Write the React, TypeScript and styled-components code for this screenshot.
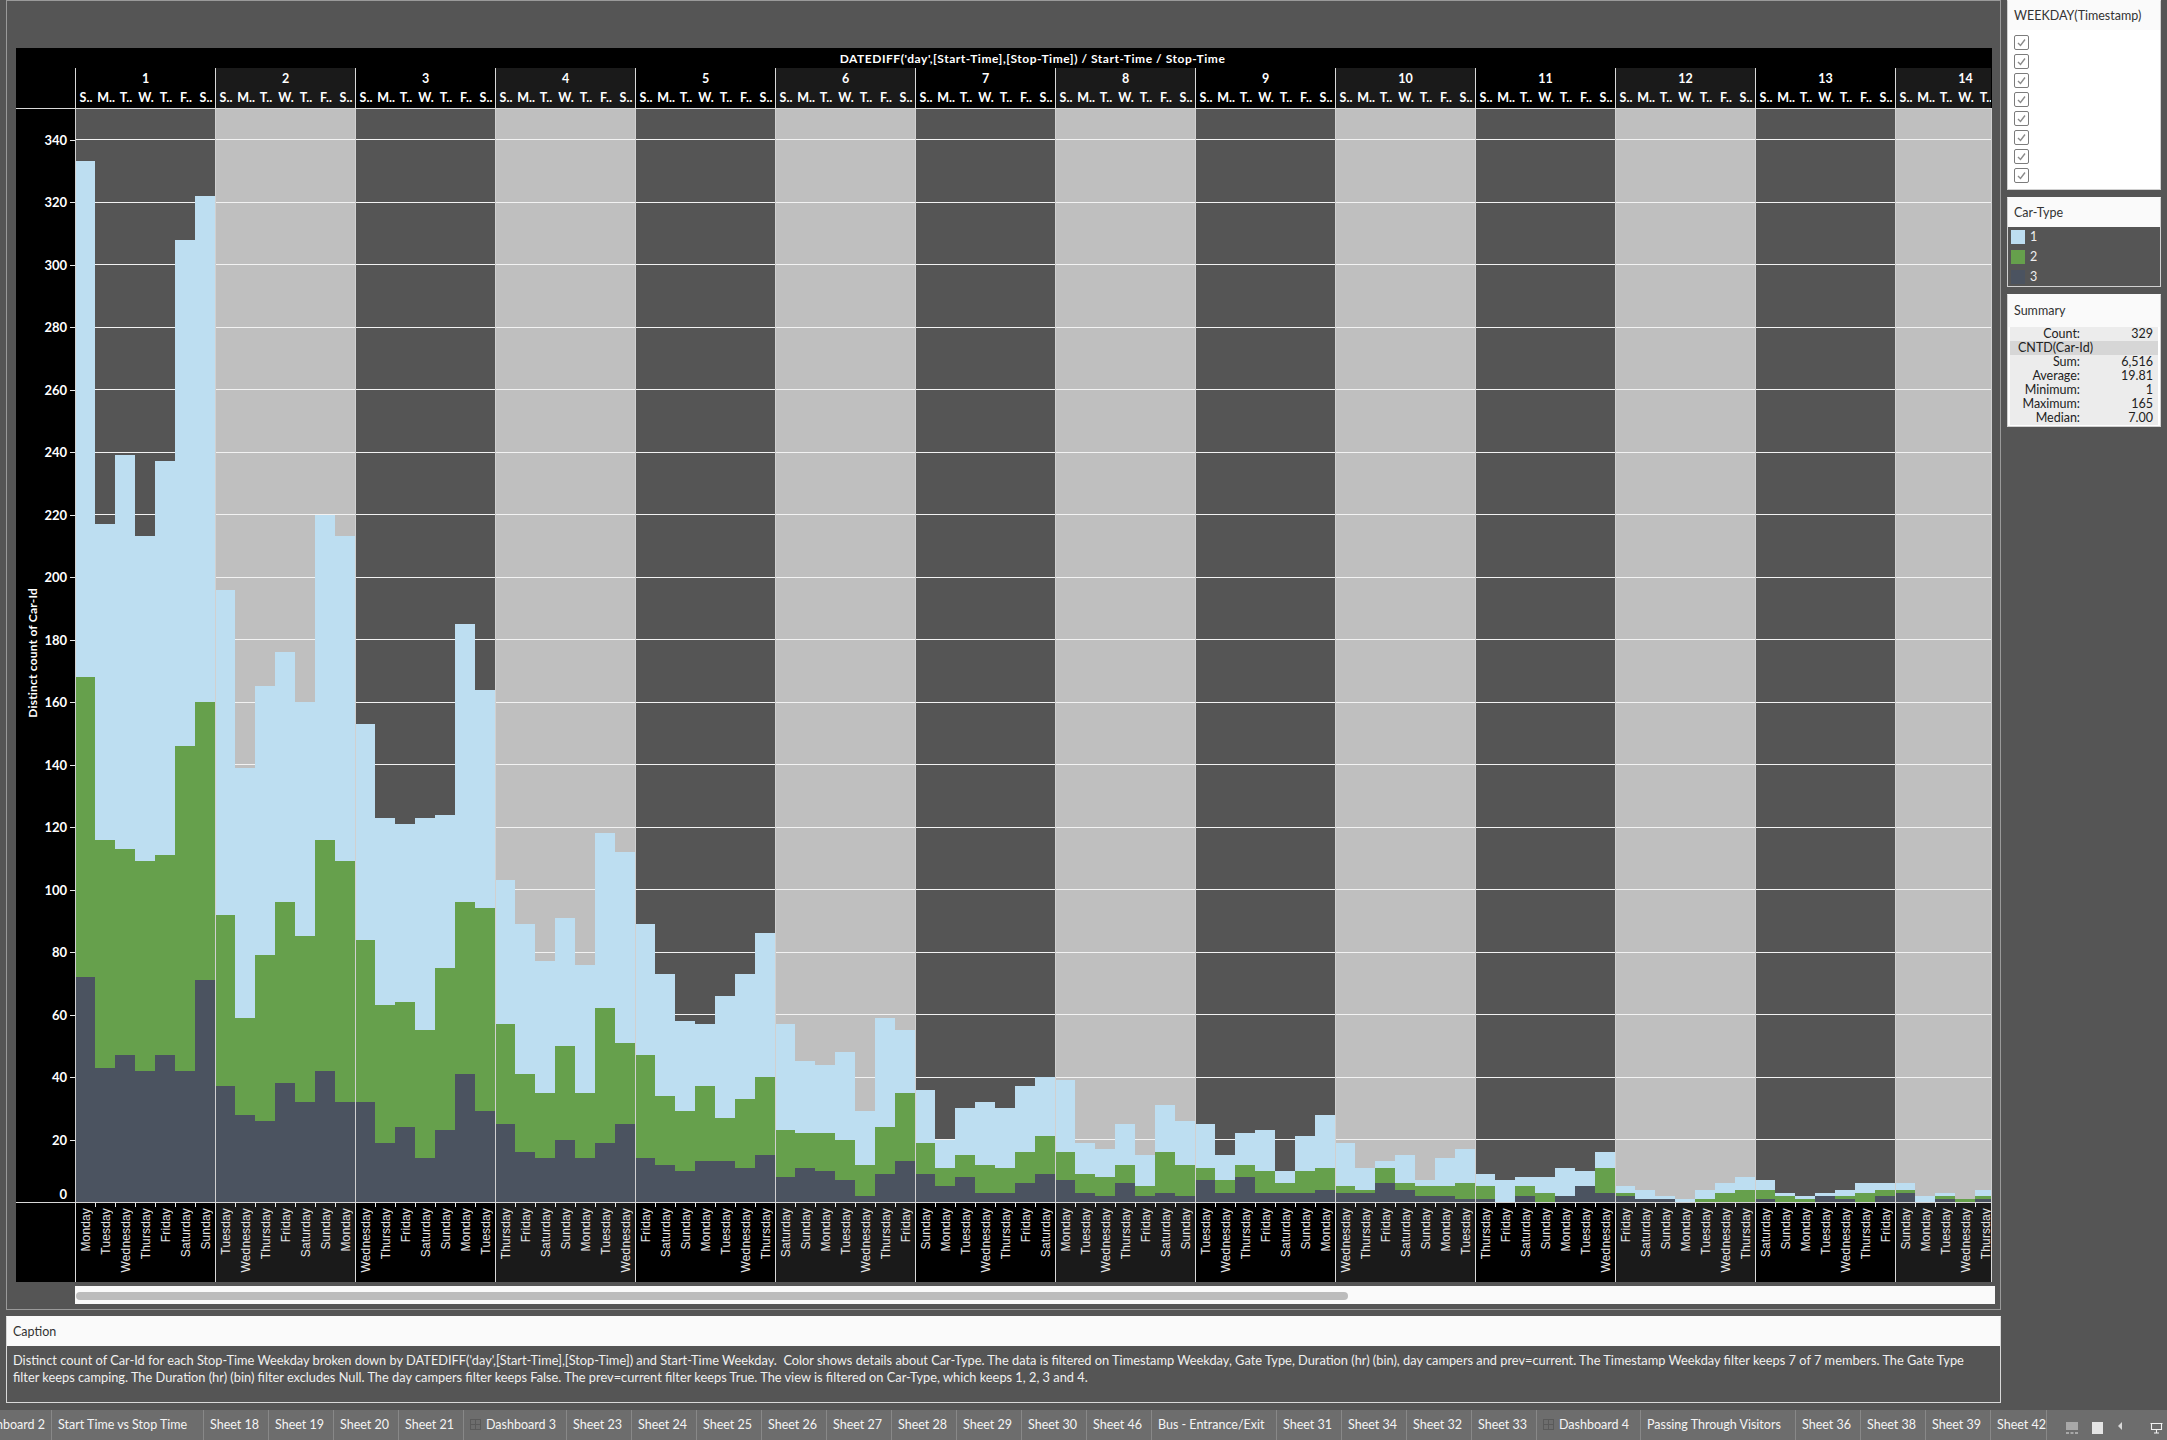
import styled, { createGlobalStyle } from "styled-components";

const GlobalStyle = createGlobalStyle`
  html, body {
    margin: 0;
    padding: 0;
    background: #555555;
    overflow: hidden;
  }
  * { box-sizing: border-box; }
`;

const UI_FONT = `Lato, "Open Sans", sans-serif`;
const AXIS_FONT = `"Liberation Sans", Arial, sans-serif`;

const Page = styled.div`
  width: 2167px;
  height: 1440px;
  display: flex;
  flex-direction: column;
  background: #555555;
  font-family: ${UI_FONT};
`;

const Workspace = styled.div`
  height: 1410px;
  display: flex;
  padding-left: 6px;
`;

const MainColumn = styled.div`
  width: 1995px;
  display: flex;
  flex-direction: column;
`;

const ViewFrame = styled.div`
  height: 1310px;
  padding: 47px 0 0 9px;
  border: 1px solid #9a9a9a;
`;

const ChartBlack = styled.div`
  width: 1976px;
  height: 1234px;
  background: #000;
  color: #fff;
  display: flex;
  flex-direction: column;
`;

const ChartTitle = styled.div`
  height: 20px;
  text-align: center;
  font: bold 12px/21px ${UI_FONT};
  letter-spacing: 0.54px;
  padding-left: 57px;
`;

const HeaderRow = styled.div`
  height: 41px;
  display: flex;
  border-bottom: 1px solid #d8d8d8;
`;

const Gutter = styled.div`
  width: 59px;
  flex: none;
`;

const PaneHeader = styled.div<{ $width: number; $alt: boolean }>`
  width: ${(p) => p.$width}px;
  flex: none;
  background: ${(p) => (p.$alt ? "#1a1a1a" : "#000")};
  border-left: 1px solid #d8d8d8;
  overflow: hidden;
`;

const PaneNumber = styled.div`
  width: 139px;
  height: 20px;
  text-align: center;
  font: bold 12.5px/22px ${UI_FONT};
`;

const DayRow = styled.div`
  display: flex;
`;

const DayAbbrev = styled.div`
  width: 20px;
  flex: none;
  text-align: center;
  font: bold 12.5px/20px ${UI_FONT};
  white-space: nowrap;
`;

const PlotRow = styled.div`
  height: 1093px;
  display: flex;
`;

const AxisGutter = styled.div`
  width: 59px;
  flex: none;
  display: flex;
`;

const AxisTitleSlot = styled.div`
  width: 24px;
  flex: none;
  display: flex;
  align-items: center;
  justify-content: flex-end;
  padding-bottom: 6px;
`;

const AxisTitle = styled.div`
  writing-mode: vertical-rl;
  transform: rotate(180deg);
  white-space: nowrap;
  font: bold 12px/14px ${UI_FONT};
  letter-spacing: 0.2px;
`;

const TickColumn = styled.div`
  flex: 1;
  display: flex;
  flex-direction: column;
  margin-top: -0.5px;
`;

const TickRow = styled.div<{ $lift?: boolean }>`
  height: 62.5px;
  flex: none;
  position: relative;
  text-align: right;
  padding-right: 8px;
  font: bold 13px/62.5px ${UI_FONT};
  span {
    position: relative;
    top: ${(p) => (p.$lift ? "-8px" : "0")};
  }
  &::after {
    content: "";
    display: ${(p) => (p.$lift ? "none" : "block")};
    position: absolute;
    right: 0;
    top: 31px;
    width: 5px;
    height: 1px;
    background: #e8e8e8;
  }
`;

const PlotSvg = styled.svg`
  display: block;
  flex: none;
`;

const BottomAxis = styled.div`
  height: 80px;
  display: flex;
  border-top: 1px solid #d8d8d8;
`;

const AxisPane = styled.div<{ $width: number; $alt: boolean; $last?: boolean }>`
  width: ${(p) => p.$width}px;
  flex: none;
  display: flex;
  background: ${(p) => (p.$alt ? "#1a1a1a" : "#000")};
  border-left: 1px solid #d8d8d8;
  border-right: ${(p) => (p.$last ? "1px solid #d8d8d8" : "none")};
  overflow: hidden;
`;

const AxisCell = styled.div<{ $tick: boolean }>`
  width: 20px;
  flex: none;
  position: relative;
  display: flex;
  align-items: flex-start;
  justify-content: center;
  padding-top: 5px;
  &::before {
    content: "";
    display: ${(p) => (p.$tick ? "block" : "none")};
    position: absolute;
    left: -1px;
    top: 0;
    width: 1px;
    height: 4px;
    background: #e8e8e8;
  }
`;

const AxisLabel = styled.div`
  writing-mode: vertical-rl;
  transform: rotate(180deg);
  white-space: nowrap;
  font: 12px/20px ${AXIS_FONT};
  color: #e6e6e6;
  letter-spacing: 0.15px;
`;

const ScrollTrack = styled.div`
  width: 1920px;
  height: 18px;
  margin: 4px 0 0 59px;
  padding: 6px 1px 0;
  background: #fafafa;
`;

const ScrollThumb = styled.div`
  width: 1272px;
  height: 8px;
  border-radius: 4px;
  background: #bcbcbc;
`;

const CaptionBox = styled.div`
  height: 87px;
  margin-top: 6px;
  border: 1px solid #d8d8d8;
  border-top-color: #fafafa;
`;

const PanelHead = styled.div<{ $height: number }>`
  height: ${(p) => p.$height}px;
  background: #fafafa;
  color: #333;
  padding-left: 6px;
  font: 12.5px/${(p) => p.$height}px ${UI_FONT};
`;

const CaptionText = styled.div`
  padding: 6px 0 0 6px;
  color: #f0f0f0;
  font: 12.8px/17px ${UI_FONT};
  white-space: pre;
`;

const SideColumn = styled.div`
  width: 154px;
  margin-left: 6px;
  display: flex;
  flex-direction: column;
  gap: 7px;
`;

const SidePanel = styled.div<{ $height: number; $dark?: boolean }>`
  height: ${(p) => p.$height}px;
  background: ${(p) => (p.$dark ? "#555" : "#fff")};
  border: 1px solid #d0d0d0;
  border-top-color: #fafafa;
`;

const CheckList = styled.div`
  display: flex;
  flex-direction: column;
  gap: 4px;
  padding: 5px 0 0 6px;
`;

const CheckBox = styled.div`
  width: 15px;
  height: 15px;
  border: 1px solid #7c7c7c;
  border-radius: 2px;
  display: flex;
  align-items: center;
  justify-content: center;
`;

const LegendList = styled.div`
  padding: 3px 0 0 3px;
  display: flex;
  flex-direction: column;
  gap: 6px;
`;

const LegendRow = styled.div`
  display: flex;
  align-items: center;
  gap: 5px;
  height: 14px;
  color: #eee;
  font: 12.5px/14px ${UI_FONT};
`;

const Swatch = styled.div<{ $color: string }>`
  width: 14px;
  height: 14px;
  background: ${(p) => p.$color};
`;

const SummaryTable = styled.div`
  margin: 0 2px;
  display: flex;
  flex-direction: column;
`;

const SummaryRow = styled.div<{ $head?: boolean }>`
  height: 14px;
  display: flex;
  justify-content: space-between;
  padding-right: 5px;
  background: ${(p) => (p.$head ? "#d6d6d6" : "#ececec")};
  color: #222;
  font: 12.5px/14px ${UI_FONT};
`;

const SummaryKey = styled.span`
  width: 70px;
  text-align: right;
`;

const SummaryHead = styled.span`
  padding-left: 8px;
`;

const TabBar = styled.div`
  height: 30px;
  display: flex;
  background: #6d6d6d;
  color: #f4f4f4;
`;

const Tab = styled.div<{ $width: number; $clip?: boolean }>`
  width: ${(p) => p.$width}px;
  flex: none;
  display: flex;
  align-items: center;
  justify-content: ${(p) => (p.$clip ? "flex-end" : "flex-start")};
  gap: 5px;
  overflow: hidden;
  white-space: nowrap;
  border-right: 1px solid #888;
  font: 12.5px/27px ${UI_FONT};
  padding: 0 ${(p) => (p.$clip ? "6px" : "0")} 2px ${(p) => (p.$clip ? "0" : "6px")};
`;

const StatusIcons = styled.div`
  flex: 1;
  display: flex;
  align-items: flex-start;
  padding: 12px 4px 0 19px;
  justify-content: space-between;
`;

const BLUE = "#bddef1";
const GREEN = "#66a04c";
const SLATE = "#4b5360";
const ROW_H = 1093;
const K = 3.125;

const WEEK = ["Monday", "Tuesday", "Wednesday", "Thursday", "Friday", "Saturday", "Sunday"];
const ABBREV = ["S..", "M..", "T..", "W.", "T..", "F..", "S.."];

// [total, top of green, top of slate] per stop-time weekday, one list per day difference
const PANES: number[][][] = [
  [[333, 168, 72], [217, 116, 43], [239, 113, 47], [213, 109, 42], [237, 111, 47], [308, 146, 42], [322, 160, 71]],
  [[196, 92, 37], [139, 59, 28], [165, 79, 26], [176, 96, 38], [160, 85, 32], [220, 116, 42], [213, 109, 32]],
  [[153, 84, 32], [123, 63, 19], [121, 64, 24], [123, 55, 14], [124, 75, 23], [185, 96, 41], [164, 94, 29]],
  [[103, 57, 25], [89, 41, 16], [77, 35, 14], [91, 50, 20], [76, 35, 14], [118, 62, 19], [112, 51, 25]],
  [[89, 47, 14], [73, 34, 12], [58, 29, 10], [57, 37, 13], [66, 27, 13], [73, 33, 11], [86, 40, 15]],
  [[57, 23, 8], [45, 22, 11], [44, 22, 10], [48, 20, 7], [29, 12, 2], [59, 24, 9], [55, 35, 13]],
  [[36, 19, 9], [20, 11, 5], [30, 15, 8], [32, 12, 3], [30, 11, 3], [37, 16, 6], [40, 21, 9]],
  [[39, 16, 7], [19, 9, 3], [17, 8, 2], [25, 12, 6], [15, 5, 2], [31, 16, 3], [26, 12, 2]],
  [[25, 11, 7], [15, 7, 3], [22, 12, 8], [23, 10, 3], [10, 6, 3], [21, 10, 3], [28, 11, 4]],
  [[19, 5, 3], [11, 4, 3], [13, 11, 6], [15, 6, 4], [7, 5, 2], [14, 5, 2], [17, 6, 1]],
  [[9, 5, 1], [7, 0, 0], [8, 5, 2], [8, 3, 0], [11, 2, 2], [10, 5, 5], [16, 11, 3]],
  [[5, 3, 2], [4, 1, 1], [2, 1, 1], [1, 0, 0], [4, 1, 0], [6, 3, 0], [8, 4, 0]],
  [[7, 4, 1], [3, 2, 0], [2, 1, 0], [3, 2, 2], [4, 2, 1], [6, 3, 0], [6, 4, 2]],
  [[6, 4, 3], [2, 0, 0], [3, 2, 1], [1, 1, 0], [4, 2, 1]],
];

const paneWidth = (i: number) => (i === 13 ? 96 : 140);
const barY = (v: number) => Math.round(ROW_H - v * K);
const TICKS = Array.from({ length: 18 }, (_, i) => 340 - i * 20);

const CAPTION_1 =
  "Distinct count of Car-Id for each Stop-Time Weekday broken down by DATEDIFF('day',[Start-Time],[Stop-Time]) and Start-Time Weekday.  Color shows details about Car-Type. The data is filtered on Timestamp Weekday, Gate Type, Duration (hr) (bin), day campers and prev=current. The Timestamp Weekday filter keeps 7 of 7 members. The Gate Type";
const CAPTION_2 =
  "filter keeps camping. The Duration (hr) (bin) filter excludes Null. The day campers filter keeps False. The prev=current filter keeps True. The view is filtered on Car-Type, which keeps 1, 2, 3 and 4.";

const TABS: { label: string; width: number; dash?: boolean; clip?: boolean }[] = [
  { label: "Dashboard 2", width: 52, clip: true },
  { label: "Start Time vs Stop Time", width: 152 },
  { label: "Sheet 18", width: 65 },
  { label: "Sheet 19", width: 65 },
  { label: "Sheet 20", width: 65 },
  { label: "Sheet 21", width: 65 },
  { label: "Dashboard 3", width: 103, dash: true },
  { label: "Sheet 23", width: 65 },
  { label: "Sheet 24", width: 65 },
  { label: "Sheet 25", width: 65 },
  { label: "Sheet 26", width: 65 },
  { label: "Sheet 27", width: 65 },
  { label: "Sheet 28", width: 65 },
  { label: "Sheet 29", width: 65 },
  { label: "Sheet 30", width: 65 },
  { label: "Sheet 46", width: 65 },
  { label: "Bus - Entrance/Exit", width: 125 },
  { label: "Sheet 31", width: 65 },
  { label: "Sheet 34", width: 65 },
  { label: "Sheet 32", width: 65 },
  { label: "Sheet 33", width: 65 },
  { label: "Dashboard 4", width: 104, dash: true },
  { label: "Passing Through Visitors", width: 155 },
  { label: "Sheet 36", width: 65 },
  { label: "Sheet 38", width: 65 },
  { label: "Sheet 39", width: 65 },
  { label: "Sheet 42", width: 56 },
];

function DashIcon() {
  return (
    <svg width="11" height="11" viewBox="0 0 11 11">
      <rect x="0.5" y="0.5" width="10" height="10" fill="none" stroke="#5a5a5a" />
      <path d="M5.5 0v11M0 5.5h11" stroke="#5a5a5a" />
    </svg>
  );
}

function Plot() {
  let left = 0;
  const panes = PANES.map((cols, i) => {
    const x = left;
    left += paneWidth(i);
    return (
      <g key={i}>
        <rect x={x} y={0} width={paneWidth(i)} height={ROW_H} fill={i % 2 ? "#bfbfbf" : "#555555"} />
        {TICKS.slice(0, 17).map((t) => (
          <rect key={t} x={x} y={Math.floor(ROW_H - t * K)} width={paneWidth(i)} height={1} fill="#f2f2f2" />
        ))}
        {cols.map(([total, green, slate], j) => {
          const cx = x + j * 20;
          return (
            <g key={j}>
              <rect x={cx} y={barY(total)} width={20} height={ROW_H - barY(total)} fill={BLUE} />
              <rect x={cx} y={barY(green)} width={20} height={ROW_H - barY(green)} fill={GREEN} />
              <rect x={cx} y={barY(slate)} width={20} height={ROW_H - barY(slate)} fill={SLATE} />
            </g>
          );
        })}
        <rect x={x} y={0} width={1} height={ROW_H} fill="#d0d0d0" />
      </g>
    );
  });
  return (
    <PlotSvg width={1917} height={ROW_H} viewBox={`0 0 1917 ${ROW_H}`} shapeRendering="crispEdges">
      {panes}
      <rect x={1916} y={0} width={1} height={ROW_H} fill="#d0d0d0" />
    </PlotSvg>
  );
}

export default function App() {
  return (
    <Page>
      <GlobalStyle />
      <Workspace>
        <MainColumn>
          <ViewFrame>
            <ChartBlack>
              <ChartTitle>DATEDIFF('day',[Start-Time],[Stop-Time]) / Start-Time / Stop-Time</ChartTitle>
              <HeaderRow>
                <Gutter />
                {PANES.map((cols, i) => (
                  <PaneHeader key={i} $width={paneWidth(i)} $alt={i % 2 === 1}>
                    <PaneNumber>{i + 1}</PaneNumber>
                    <DayRow>
                      {cols.map((_, j) => (
                        <DayAbbrev key={j}>{ABBREV[j]}</DayAbbrev>
                      ))}
                    </DayRow>
                  </PaneHeader>
                ))}
              </HeaderRow>
              <PlotRow>
                <AxisGutter>
                  <AxisTitleSlot>
                    <AxisTitle>Distinct count of Car-Id</AxisTitle>
                  </AxisTitleSlot>
                  <TickColumn>
                    {TICKS.map((t) => (
                      <TickRow key={t} $lift={t === 0}>
                        <span>{t}</span>
                      </TickRow>
                    ))}
                  </TickColumn>
                </AxisGutter>
                <Plot />
              </PlotRow>
              <BottomAxis>
                <Gutter />
                {PANES.map((cols, i) => (
                  <AxisPane key={i} $width={i === 13 ? 97 : paneWidth(i)} $alt={i % 2 === 1} $last={i === 13}>
                    {cols.map((_, j) => (
                      <AxisCell key={j} $tick={j > 0}>
                        <AxisLabel>{WEEK[(i + j) % 7]}</AxisLabel>
                      </AxisCell>
                    ))}
                  </AxisPane>
                ))}
              </BottomAxis>
            </ChartBlack>
            <ScrollTrack>
              <ScrollThumb />
            </ScrollTrack>
          </ViewFrame>
          <CaptionBox>
            <PanelHead $height={29}>Caption</PanelHead>
            <CaptionText>
              {CAPTION_1}
              {"\n"}
              {CAPTION_2}
            </CaptionText>
          </CaptionBox>
        </MainColumn>
        <SideColumn>
          <SidePanel $height={190}>
            <PanelHead $height={29}>WEEKDAY(Timestamp)</PanelHead>
            <CheckList>
              {Array.from({ length: 8 }, (_, i) => (
                <CheckBox key={i}>
                  <svg width="11" height="11" viewBox="0 0 11 11">
                    <path d="M2 6l2.5 2.5L9 2.5" fill="none" stroke="#8a8a8a" strokeWidth="1.4" />
                  </svg>
                </CheckBox>
              ))}
            </CheckList>
          </SidePanel>
          <SidePanel $height={90} $dark>
            <PanelHead $height={29}>Car-Type</PanelHead>
            <LegendList>
              <LegendRow>
                <Swatch $color={BLUE} />1
              </LegendRow>
              <LegendRow>
                <Swatch $color={GREEN} />2
              </LegendRow>
              <LegendRow>
                <Swatch $color={SLATE} />3
              </LegendRow>
            </LegendList>
          </SidePanel>
          <SidePanel $height={133}>
            <PanelHead $height={32}>Summary</PanelHead>
            <SummaryTable>
              <SummaryRow>
                <SummaryKey>Count:</SummaryKey>329
              </SummaryRow>
              <SummaryRow $head>
                <SummaryHead>CNTD(Car-Id)</SummaryHead>
              </SummaryRow>
              <SummaryRow>
                <SummaryKey>Sum:</SummaryKey>6,516
              </SummaryRow>
              <SummaryRow>
                <SummaryKey>Average:</SummaryKey>19.81
              </SummaryRow>
              <SummaryRow>
                <SummaryKey>Minimum:</SummaryKey>1
              </SummaryRow>
              <SummaryRow>
                <SummaryKey>Maximum:</SummaryKey>165
              </SummaryRow>
              <SummaryRow>
                <SummaryKey>Median:</SummaryKey>7.00
              </SummaryRow>
            </SummaryTable>
          </SidePanel>
        </SideColumn>
      </Workspace>
      <TabBar>
        {TABS.map((t) => (
          <Tab key={t.label} $width={t.width} $clip={t.clip}>
            {t.dash && <DashIcon />}
            {t.label}
          </Tab>
        ))}
        <StatusIcons>
          <svg width="12" height="12" viewBox="0 0 12 12">
            <rect width="12" height="8" fill="#a8a8a8" />
            <path d="M0 10h3v2H0zM4.5 10h3v2h-3zM9 10h3v2H9z" fill="#a8a8a8" />
          </svg>
          <svg width="11" height="12" viewBox="0 0 11 12">
            <rect width="11" height="12" fill="#e4e4e4" />
          </svg>
          <svg width="4" height="8" viewBox="0 0 4 8">
            <path d="M4 0v8L0 4z" fill="#d8d8d8" />
          </svg>
          <span />
          <svg width="13" height="12" viewBox="0 0 13 12">
            <path d="M0.5 1.5h12M1.5 1.5v6h10v-6M6.5 7.5v3M4 11h5" fill="none" stroke="#f2f2f2" strokeWidth="1.1" />
          </svg>
        </StatusIcons>
      </TabBar>
    </Page>
  );
}
